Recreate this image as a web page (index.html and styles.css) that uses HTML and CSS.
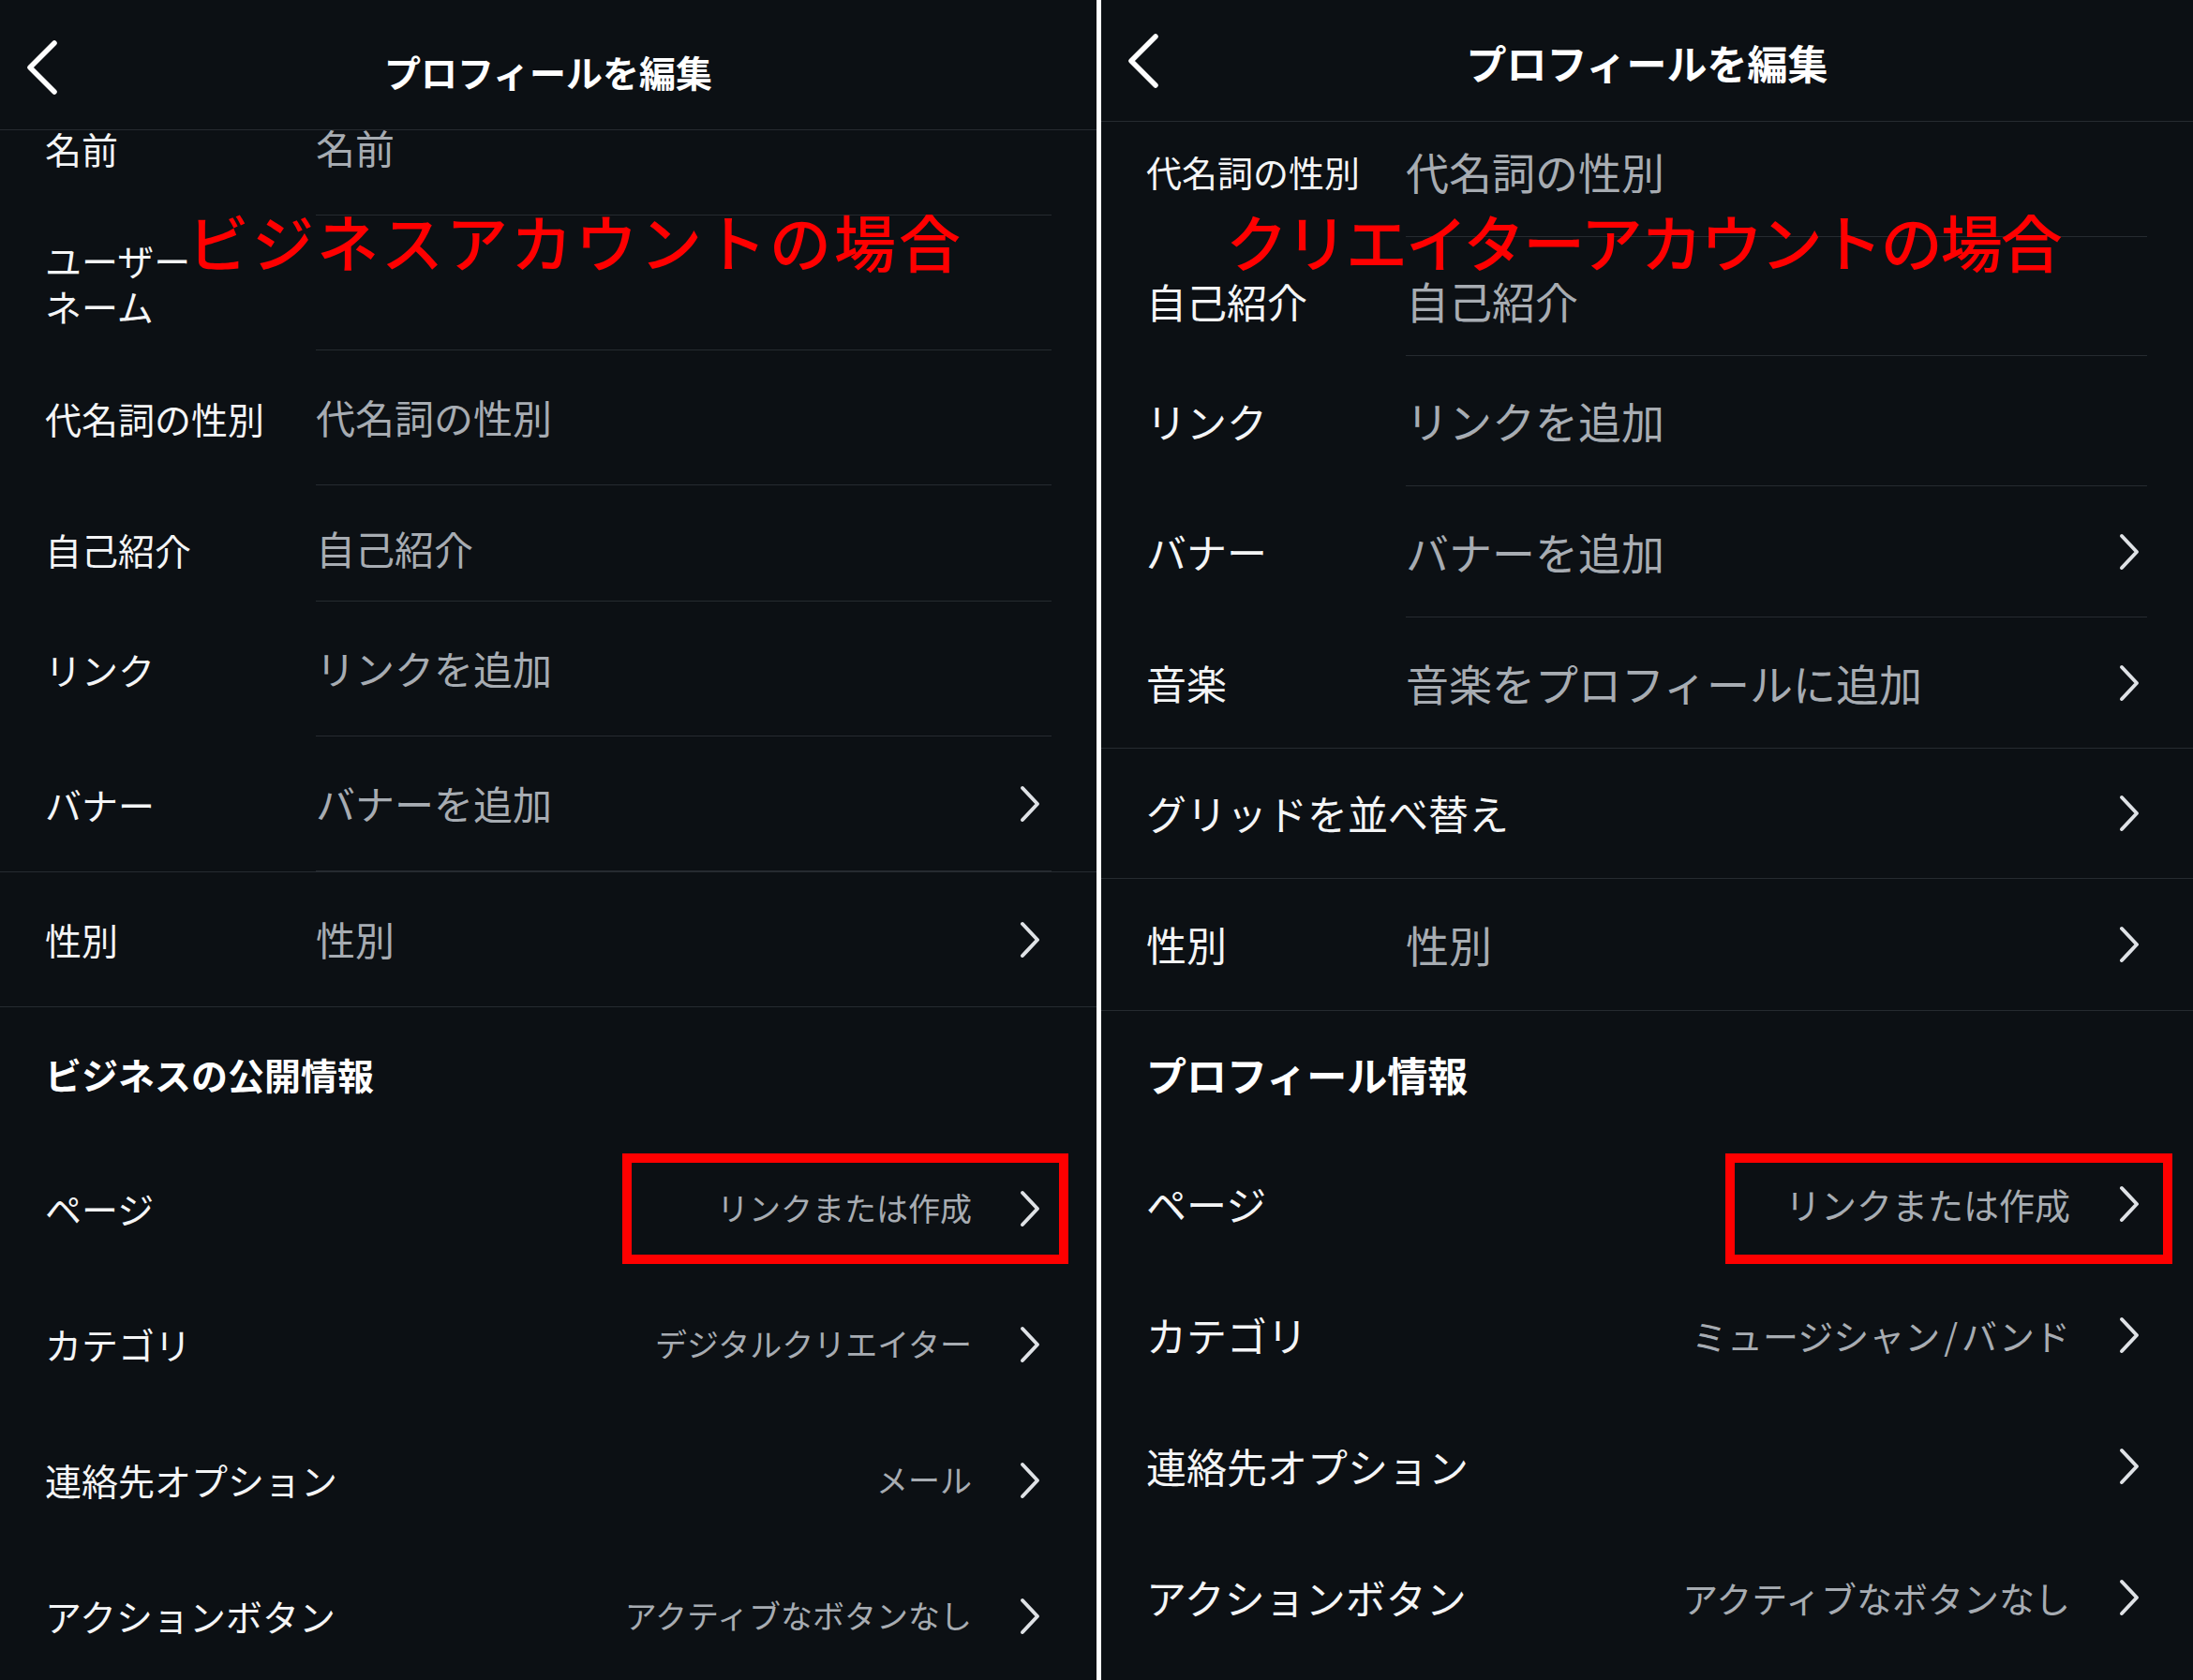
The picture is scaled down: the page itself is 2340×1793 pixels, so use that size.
FILE: index.html
```html
<!DOCTYPE html>
<html lang="ja">
<head>
<meta charset="utf-8">
<title>プロフィールを編集</title>
<link rel="stylesheet" href="styles.css">
</head>
<body>
<div class="screens">
  <section class="panel panel-biz">
    <header class="topbar">
      <svg class="back" viewBox="0 0 34 58"><path d="M30 3 L4 29 L30 55"/></svg>
      <h1 class="title">プロフィールを編集</h1>
      <span class="spacer"></span>
    </header>
    <div class="scroll">
      <div class="list">
        <div class="group">
          <div class="row field"><span class="label">名前</span><span class="value"><span class="text">名前</span></span></div>
          <div class="row field"><span class="label">ユーザー<br>ネーム</span><span class="value"><span class="text"></span></span></div>
          <div class="row field"><span class="label">代名詞の性別</span><span class="value"><span class="text">代名詞の性別</span></span></div>
          <div class="row field bio"><span class="label">自己紹介</span><span class="value"><span class="text">自己紹介</span></span></div>
          <div class="row field"><span class="label">リンク</span><span class="value"><span class="text">リンクを追加</span></span></div>
          <div class="row field"><span class="label">バナー</span><span class="value"><span class="text">バナーを追加</span><svg class="chev" viewBox="0 0 22 40"><path d="M3 3 L19 20 L3 37"/></svg></span></div>
        </div>
        <div class="group">
          <div class="row field last single"><span class="label">性別</span><span class="value"><span class="text">性別</span><svg class="chev" viewBox="0 0 22 40"><path d="M3 3 L19 20 L3 37"/></svg></span></div>
        </div>
        <div class="row section"><h2 class="section-title">ビジネスの公開情報</h2></div>
        <div class="row nav"><span class="label">ページ</span><span class="meta">リンクまたは作成</span><svg class="chev" viewBox="0 0 22 40"><path d="M3 3 L19 20 L3 37"/></svg></div>
        <div class="row nav"><span class="label">カテゴリ</span><span class="meta">デジタルクリエイター</span><svg class="chev" viewBox="0 0 22 40"><path d="M3 3 L19 20 L3 37"/></svg></div>
        <div class="row nav"><span class="label">連絡先オプション</span><span class="meta">メール</span><svg class="chev" viewBox="0 0 22 40"><path d="M3 3 L19 20 L3 37"/></svg></div>
        <div class="row nav"><span class="label">アクションボタン</span><span class="meta">アクティブなボタンなし</span><svg class="chev" viewBox="0 0 22 40"><path d="M3 3 L19 20 L3 37"/></svg></div>
      </div>
    </div>
    <p class="note">ビジネスアカウントの場合</p>
    <div class="mark"></div>
  </section>

  <section class="panel panel-creator">
    <header class="topbar">
      <svg class="back" viewBox="0 0 34 58"><path d="M30 3 L4 29 L30 55"/></svg>
      <h1 class="title">プロフィールを編集</h1>
      <span class="spacer"></span>
    </header>
    <div class="scroll">
      <div class="list">
        <div class="group">
          <div class="row field"><span class="label fit">代名詞の性別</span><span class="value"><span class="text">代名詞の性別</span></span></div>
          <div class="row field bio"><span class="label">自己紹介</span><span class="value"><span class="text">自己紹介</span></span></div>
          <div class="row field"><span class="label">リンク</span><span class="value"><span class="text">リンクを追加</span></span></div>
          <div class="row field"><span class="label">バナー</span><span class="value"><span class="text">バナーを追加</span><svg class="chev" viewBox="0 0 22 40"><path d="M3 3 L19 20 L3 37"/></svg></span></div>
          <div class="row field last music"><span class="label">音楽</span><span class="value"><span class="text">音楽をプロフィールに追加</span><svg class="chev" viewBox="0 0 22 40"><path d="M3 3 L19 20 L3 37"/></svg></span></div>
        </div>
        <div class="group">
          <div class="row nav grid-row"><span class="label">グリッドを並べ替え</span><svg class="chev" viewBox="0 0 22 40"><path d="M3 3 L19 20 L3 37"/></svg></div>
        </div>
        <div class="group">
          <div class="row field last single"><span class="label">性別</span><span class="value"><span class="text">性別</span><svg class="chev" viewBox="0 0 22 40"><path d="M3 3 L19 20 L3 37"/></svg></span></div>
        </div>
        <div class="row section"><h2 class="section-title">プロフィール情報</h2></div>
        <div class="row nav"><span class="label">ページ</span><span class="meta">リンクまたは作成</span><svg class="chev" viewBox="0 0 22 40"><path d="M3 3 L19 20 L3 37"/></svg></div>
        <div class="row nav"><span class="label">カテゴリ</span><span class="meta">ミュージシャン<span class="slash">/</span>バンド</span><svg class="chev" viewBox="0 0 22 40"><path d="M3 3 L19 20 L3 37"/></svg></div>
        <div class="row nav"><span class="label">連絡先オプション</span><svg class="chev" viewBox="0 0 22 40"><path d="M3 3 L19 20 L3 37"/></svg></div>
        <div class="row nav"><span class="label">アクションボタン</span><span class="meta">アクティブなボタンなし</span><svg class="chev" viewBox="0 0 22 40"><path d="M3 3 L19 20 L3 37"/></svg></div>
      </div>
    </div>
    <p class="note">クリエイターアカウントの場合</p>
    <div class="mark"></div>
  </section>
</div>
</body>
</html>
```

FILE: styles.css
```css
* { box-sizing: border-box; margin: 0; padding: 0; }

html, body { background: #ffffff; }

body {
  width: 2340px;
  height: 1793px;
  overflow: hidden;
  font-family: "Noto Sans CJK JP", "Noto Sans", sans-serif;
  color: #f4f5f6;
}

.screens {
  display: flex;
  gap: 5px;
  height: 1793px;
}

.panel {
  position: relative;
  display: flex;
  flex-direction: column;
  height: 100%;
  overflow: hidden;
  background: #0c1014;
}

.panel-biz { width: 1170px; }
.panel-creator { width: 1165px; }

/* ---------- top bar ---------- */
.topbar {
  flex: none;
  display: grid;
  grid-template-columns: 1fr auto 1fr;
  align-items: center;
  padding: 0 28px;
  border-bottom: 1px solid #262b30;
}

.panel-biz .topbar { height: 139px; padding-top: 6px; }
.panel-creator .topbar { height: 130px; }

.back {
  width: 34px;
  height: 58px;
  fill: none;
  stroke: #ffffff;
  stroke-width: 5.5;
  stroke-linecap: round;
  stroke-linejoin: round;
}

.title {
  font-weight: 700;
  line-height: 1.2;
  white-space: nowrap;
  color: #ffffff;
}

.panel-biz .title { font-size: 39px; margin-top: 8px; }
.panel-creator .title { font-size: 43px; margin-top: 4px; }

/* ---------- list ---------- */
.scroll {
  flex: 1;
  overflow: hidden;
}

.panel-biz .list { margin-top: -53px; }
.panel-creator .list { margin-top: -17px; }

.group { border-bottom: 1px solid #262b30; }

.row {
  display: flex;
  align-items: center;
  padding-left: 48px;
}

.panel-biz .row { height: 144px; padding-right: 48px; }
.panel-creator .row { height: 140px; padding-right: 49px; }

.label {
  flex: none;
  line-height: 1.25;
  white-space: nowrap;
}

.panel-biz .label { font-size: 39px; }
.panel-creator .label { font-size: 43px; }
.panel-creator .label.fit { font-size: 38px; }

.field { align-items: stretch; }

.field .label { align-self: center; }
.panel-biz .field .label { width: 289px; }
.panel-creator .field .label { width: 277px; }

.field .value {
  flex: 1;
  display: flex;
  align-items: center;
  border-bottom: 1px solid #262b30;
}

.field.last .value { border-bottom: none; }

.value .text {
  flex: 1;
  color: #a7acb2;
  line-height: 1.25;
  white-space: nowrap;
}

.panel-biz .value .text { font-size: 42px; }
.panel-creator .value .text { font-size: 46px; }

.panel-biz .row.bio { height: 124px; padding-top: 12px; }
.panel-creator .row.bio { height: 127px; padding-top: 10px; }

.panel-biz .row.single { height: 143px; }
.panel-creator .row.music { height: 139px; }
.panel-creator .row.grid-row { height: 138px; }

.panel-creator .group .row:nth-child(3) { height: 139px; }

.chev {
  flex: none;
  width: 22px;
  height: 40px;
  fill: none;
  stroke: #dfe2e6;
  stroke-width: 4;
  stroke-linecap: round;
  stroke-linejoin: round;
}

.panel-biz .chev { margin-right: 12px; }
.panel-creator .chev { margin-right: 8px; }

/* ---------- section ---------- */
.section-title {
  font-weight: 700;
  line-height: 1.25;
  color: #ffffff;
  white-space: nowrap;
}

.panel-biz .row.section { height: 142px; }
.panel-creator .row.section { height: 136px; }
.panel-biz .section-title { font-size: 39px; }
.panel-creator .section-title { font-size: 43px; }

.nav .label { flex: 1; }

.panel-biz .row.nav { height: 145px; }

.meta {
  color: #a7acb2;
  line-height: 1.25;
  white-space: nowrap;
}

.meta .slash { margin: 0 4px; }

.panel-biz .meta { font-size: 34px; margin-right: 51px; }
.panel-creator .meta { font-size: 38px; margin-right: 52px; }

/* ---------- annotations ---------- */
.note {
  position: absolute;
  top: 223px;
  color: #ff0000;
  font-size: 66px;
  font-weight: 500;
  line-height: 1;
  white-space: nowrap;
}

.panel-biz .note { left: 200px; letter-spacing: 3px; }
.panel-creator .note { left: 133px; letter-spacing: -2px; }

.mark {
  position: absolute;
  top: 1231px;
  height: 118px;
  border: 10px solid #ff0000;
}

.panel-biz .mark { left: 664px; width: 476px; }
.panel-creator .mark { left: 666px; width: 477px; }
```
